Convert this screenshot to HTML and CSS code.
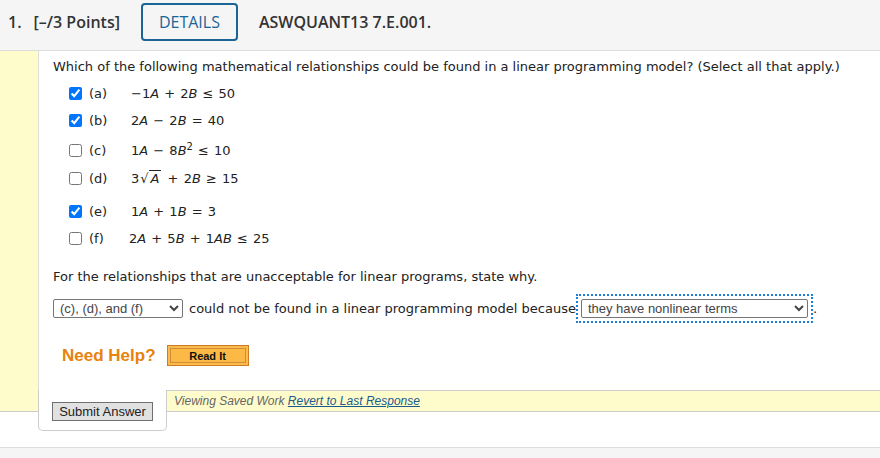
FILE: index.html
```html
<!DOCTYPE html>
<html lang="en">
<head>
    <meta charset="UTF-8">
    <title>Question 1</title>
    <link rel="stylesheet" href="styles.css">
</head>
<body>
    <div class="question">
        <div class="qhead">
            <span class="qnum">1.</span>
            <span class="pts">[–/3 Points]</span>
            <a class="details" href="#">DETAILS</a>
            <span class="qid">ASWQUANT13 7.E.001.</span>
        </div>

        <div class="qbody">
            <div class="panel">
                <p class="prompt">Which of the following mathematical relationships could be found in a linear programming model? (Select all that apply.)</p>

                <ul class="choices">
                    <li class="choice">
                        <input type="checkbox" checked>
                        <span class="letter">(a)</span>
                        <span class="math">−1<i>A</i> + 2<i>B</i> ≤ 50</span>
                    </li>
                    <li class="choice">
                        <input type="checkbox" checked>
                        <span class="letter">(b)</span>
                        <span class="math">2<i>A</i> − 2<i>B</i> = 40</span>
                    </li>
                    <li class="choice sup-row">
                        <input type="checkbox">
                        <span class="letter">(c)</span>
                        <span class="math">1<i>A</i> − 8<i>B</i><sup>2</sup> ≤ 10</span>
                    </li>
                    <li class="choice root-row">
                        <input type="checkbox">
                        <span class="letter">(d)</span>
                        <span class="math">3<span class="radic">√</span><span class="radicand"><i>A</i></span> + 2<i>B</i> ≥ 15</span>
                    </li>
                    <li class="choice after-root">
                        <input type="checkbox" checked>
                        <span class="letter">(e)</span>
                        <span class="math">1<i>A</i> + 1<i>B</i> = 3</span>
                    </li>
                    <li class="choice">
                        <input type="checkbox">
                        <span class="letter">(f)</span>
                        <span class="math shift">2<i>A</i> + 5<i>B</i> + 1<i>AB</i> ≤ 25</span>
                    </li>
                </ul>

                <p class="prompt why">For the relationships that are unacceptable for linear programs, state why.</p>

                <div class="answer">
                    <select class="pick small">
                        <option>(c), (d), and (f)</option>
                    </select>
                    <span class="sentence">could not be found in a linear programming model because</span><span class="focus"><select class="pick wide">
                        <option>they have nonlinear terms</option>
                    </select></span><span class="sentence">.</span>
                </div>

                <div class="help">
                    <span class="help-label">Need Help?</span>
                    <button class="read-it" type="button">Read It</button>
                </div>
            </div>

            <div class="submit-row">
                <div class="tab">
                    <button class="submit" type="button">Submit Answer</button>
                </div>
                <div class="saved">
                    Viewing Saved Work <a href="#">Revert to Last Response</a>
                </div>
            </div>
        </div>
    </div>

    <div class="next-head"></div>
</body>
</html>
```

FILE: styles.css
```css
body {
    margin: 0;
    background: #fff;
    font-family: 'DejaVu Sans', Verdana, sans-serif;
    color: #333;
}

.qhead {
    height: 51px;
    background: #f5f5f5;
    border-bottom: 1px solid #ddd;
    display: flex;
    align-items: center;
    font-family: 'Open Sans', sans-serif;
    font-weight: 600;
    font-size: 16px;
    color: #333;
    padding-left: 8px;
    padding-bottom: 6px;
    box-sizing: border-box;
}

.qnum {
    margin-right: 12px;
}

.details {
    margin-left: 21px;
    width: 97px;
    height: 38px;
    box-sizing: border-box;
    border: 2px solid #1a6496;
    border-radius: 4px;
    color: #1a6496;
    font-weight: 400;
    text-decoration: none;
    display: flex;
    align-items: center;
    justify-content: center;
}

.qid {
    margin-left: 21px;
}

.qbody {
    background: #fffccc;
    border-bottom: 1px solid #ccc;
}

.panel {
    margin-left: 38px;
    background: #fff;
    border-left: 1px solid #ddd;
    padding: 7px 14px 0;
    height: 339px;
    box-sizing: border-box;
    font-size: 13px;
    color: #222;
}

.prompt {
    margin: 0;
    line-height: 17px;
}

.choices {
    list-style: none;
    margin: 5px 0 0;
    padding: 0 0 0 16px;
}

.choice {
    display: flex;
    align-items: center;
    height: 27px;
}

.choice input {
    margin: 0 7px 0 0;
    width: 13px;
    height: 13px;
}

.sup-row { margin-top: 3px; }
.root-row { margin-top: 1px; }
.after-root { margin-top: 6px; }

.letter {
    width: 42px;
}

.math {
    font-size: 13px;
    word-spacing: 1px;
}

.math i {
    font-style: italic;
}

.math sup {
    font-size: 10px;
    line-height: 0;
}

.math.shift {
    margin-left: -2px;
}

.radic {
    margin-left: 1px;
}

.radicand {
    border-top: 1px solid #222;
    padding: 0 2px;
    margin-right: 1px;
}

.why {
    margin-top: 16px;
}

.answer {
    display: flex;
    align-items: center;
    margin-top: 9px;
}

.pick {
    font-family: 'Liberation Sans', Arial, sans-serif;
    font-size: 13px;
    color: #444;
    height: 19px;
    border: 1px solid #767676;
    border-radius: 2px;
    background: #fff;
    padding: 0 2px;
}

.pick.small {
    width: 130px;
}

.pick.wide {
    width: 227px;
}

.sentence {
    margin-left: 6px;
}

.focus {
    display: inline-block;
    outline: 2px dotted #1a7fd6;
    outline-offset: -2px;
    padding: 5px 5px 5px 5px;
    line-height: 0;
}

.focus + .sentence {
    margin-left: 0;
}

.help {
    display: flex;
    align-items: center;
    margin-top: 22px;
    padding-left: 9px;
}

.help-label {
    font-family: 'Liberation Sans', Arial, sans-serif;
    font-weight: bold;
    font-size: 17px;
    color: #e8820c;
}

.read-it {
    margin-left: 11px;
    width: 82px;
    height: 21px;
    font-family: 'Liberation Sans', Arial, sans-serif;
    font-weight: bold;
    font-size: 11px;
    color: #111;
    background: #fdb945;
    border: 1px solid #cf7a25;
    box-shadow: inset 0 0 0 2px #fcbc4c, inset 0 0 0 3px #d38c36;
    padding: 0;
}

.submit-row {
    display: flex;
    height: 21px;
}

.tab {
    margin-left: 38px;
    width: 129px;
    height: 41px;
    box-sizing: border-box;
    background: #fff;
    border: 1px solid #ccc;
    border-top: none;
    border-radius: 0 0 5px 5px;
    padding: 11px 0 0 13px;
}

.submit {
    font-family: 'Liberation Sans', Arial, sans-serif;
    font-size: 13px;
    color: #222;
    background: #e1e1e1;
    border: 1px solid #707070;
    height: 19px;
    width: 101px;
    padding: 0;
}

.saved {
    flex: 1;
    border-top: 1px solid #ccc;
    font-family: 'Liberation Sans', Arial, sans-serif;
    font-style: italic;
    font-size: 12px;
    color: #666;
    padding: 3px 0 0 7px;
}

.saved a {
    color: #1a5b8a;
}

.next-head {
    margin-top: 35px;
    height: 20px;
    background: #f5f5f5;
    border-top: 1px solid #ddd;
}
```
